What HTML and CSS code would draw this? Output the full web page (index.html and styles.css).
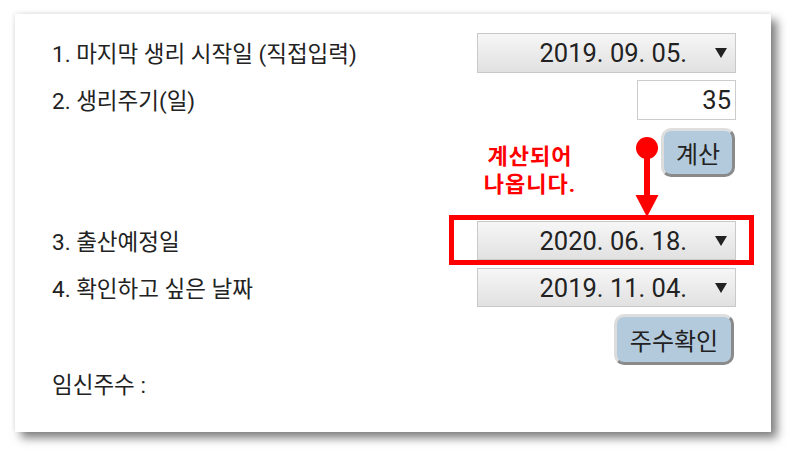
FILE: index.html
```html
<!DOCTYPE html>
<html lang="ko">
<head>
<meta charset="utf-8">
<link rel="stylesheet" href="styles.css">
</head>
<body>
<div class="card">
  <div class="row r1">
    <span class="label">1. 마지막 생리 시작일 (직접입력)</span>
    <div class="select"><span class="val">2019. 09. 05.</span><span class="arrow"></span></div>
  </div>
  <div class="row r2">
    <span class="label">2. 생리주기(일)</span>
    <div class="input">35</div>
  </div>
  <div class="row r-btn1">
    <div class="btn btn-calc">계산</div>
  </div>
  <div class="row r3">
    <span class="label">3. 출산예정일</span>
    <div class="select"><span class="val">2020. 06. 18.</span><span class="arrow"></span></div>
  </div>
  <div class="row r4">
    <span class="label">4. 확인하고 싶은 날짜</span>
    <div class="select"><span class="val">2019. 11. 04.</span><span class="arrow"></span></div>
  </div>
  <div class="row r-btn2">
    <div class="btn btn-week">주수확인</div>
  </div>
  <div class="result">임신주수 :</div>

  <div class="note">계산되어<br>나옵니다.</div>
  <svg class="pointer" width="28" height="82" viewBox="0 0 28 82">
    <circle cx="13" cy="12" r="11" fill="#ff0000"/>
    <rect x="10" y="12" width="6" height="49" fill="#ff0000"/>
    <polygon points="1.5,59 24.5,59 13,81" fill="#ff0000"/>
  </svg>
  <div class="highlight"></div>
</div>
</body>
</html>
```

FILE: styles.css
```css
html, body {
  margin: 0;
  padding: 0;
  background: #ffffff;
}
body {
  width: 800px;
  height: 461px;
  overflow: hidden;
  font-family: Roboto, "Noto Sans CJK KR", sans-serif;
  color: #222222;
}
.card {
  position: relative;
  box-sizing: border-box;
  margin: 14px 0 0 15px;
  width: 756px;
  height: 418px;
  background: #ffffff;
  padding: 19px 35px 0 37px;
  display: flex;
  flex-direction: column;
  box-shadow: 6px 6px 9px rgba(0, 0, 0, 0.5), -1px -1px 4px rgba(0, 0, 0, 0.08);
}
.row {
  display: flex;
  justify-content: space-between;
  align-items: center;
}
.r1 { height: 40px; }
.r2 { height: 40px; margin-top: 7px; }
.r-btn1 { height: 49px; margin-top: 8px; justify-content: flex-end; padding-right: 1px; }
.r3 { height: 39px; margin-top: 44px; }
.r4 { height: 39px; margin-top: 8px; }
.r-btn2 { height: 51px; margin-top: 7px; justify-content: flex-end; padding-right: 2px; }
.label {
  font-size: 22.5px;
  line-height: 26px;
  margin-top: 2px;
}
.select {
  box-sizing: border-box;
  width: 259px;
  height: 100%;
  border: 1px solid #c9c9c9;
  background: linear-gradient(#f6f6f6, #e1e1e1);
  display: flex;
  justify-content: flex-end;
  align-items: center;
  padding-right: 8px;
}
.val {
  font-size: 25.5px;
  line-height: 28px;
  color: #222222;
}
.arrow {
  width: 0;
  height: 0;
  margin-left: 28px;
  border-left: 6.5px solid transparent;
  border-right: 6.5px solid transparent;
  border-top: 10px solid #222222;
}
.input {
  box-sizing: border-box;
  width: 99px;
  height: 40px;
  border: 1px solid #cccccc;
  background: #ffffff;
  text-align: right;
  padding-right: 4px;
  font-size: 25.5px;
  line-height: 38px;
}
.btn {
  box-sizing: border-box;
  height: 100%;
  border-radius: 10px;
  border: 3px solid;
  border-color: #dedede #8a8a8a #8a8a8a #dcdcdc;
  background: #b2cadc;
  display: flex;
  align-items: center;
  justify-content: center;
  font-size: 24px;
  color: #222222;
}
.btn-calc { width: 74px; }
.btn-week { width: 120px; }
.result {
  margin-top: 7px;
  font-size: 22.5px;
  line-height: 26px;
}
.note {
  position: absolute;
  left: 455px;
  top: 129px;
  width: 120px;
  text-align: center;
  color: #ff0000;
  font-weight: 700;
  font-size: 22px;
  letter-spacing: 1px;
  line-height: 28px;
}
.pointer {
  position: absolute;
  left: 619px;
  top: 122px;
}
.highlight {
  position: absolute;
  box-sizing: border-box;
  left: 434px;
  top: 201px;
  width: 305px;
  height: 50px;
  border: 5px solid #ff0000;
}
```
